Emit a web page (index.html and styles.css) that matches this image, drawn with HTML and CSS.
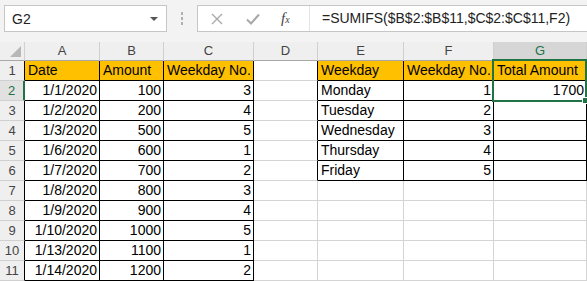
FILE: index.html
```html
<!DOCTYPE html>
<html lang="en">
<head>
  <meta charset="UTF-8">
  <title>SUMIFS by weekday</title>
  <link rel="stylesheet" href="styles.css">
</head>
<body>
  <!-- Name box and formula bar -->
  <div class="toolbar">
    <div class="name-box">
      <span>G2</span>
      <span class="caret"></span>
    </div>
    <div class="grip"><i></i><i></i><i></i></div>
    <div class="formula-bar">
      <div class="fx-buttons">
        <svg width="12" height="12" viewBox="0 0 12 12"><path d="M1 1L11 11M11 1L1 11" stroke="#a8a8a8" stroke-width="1.3" fill="none"/></svg>
        <svg width="14" height="12" viewBox="0 0 14 12"><path d="M1 6.5L5 10.5L13 1.5" stroke="#a8a8a8" stroke-width="2" fill="none"/></svg>
        <span class="fx">f<sub>x</sub></span>
      </div>
      <div class="formula">=SUMIFS($B$2:$B$11,$C$2:$C$11,F2)</div>
    </div>
  </div>

  <!-- Sheet -->
  <div class="sheet">
    <div class="ch corner"><span class="tri"></span></div>
    <div class="ch">A</div>
    <div class="ch">B</div>
    <div class="ch">C</div>
    <div class="ch">D</div>
    <div class="ch">E</div>
    <div class="ch">F</div>
    <div class="ch active">G</div>

    <!-- row 1 -->
    <div class="rh edge">1</div>
    <div class="c t gold">Date</div>
    <div class="c t gold">Amount</div>
    <div class="c t gold">Weekday No.</div>
    <div class="c edge"></div>
    <div class="c t gold">Weekday</div>
    <div class="c t gold">Weekday No.</div>
    <div class="c t gold sel">Total Amount<span class="sel-box"><span class="handle"></span></span></div>

    <!-- row 2 -->
    <div class="rh active">2</div>
    <div class="c t r">1/1/2020</div>
    <div class="c t r">100</div>
    <div class="c t r">3</div>
    <div class="c edge"></div>
    <div class="c t">Monday</div>
    <div class="c t r">1</div>
    <div class="c t r">1700</div>

    <!-- row 3 -->
    <div class="rh edge">3</div>
    <div class="c t r">1/2/2020</div>
    <div class="c t r">200</div>
    <div class="c t r">4</div>
    <div class="c edge"></div>
    <div class="c t">Tuesday</div>
    <div class="c t r">2</div>
    <div class="c t r"></div>

    <!-- row 4 -->
    <div class="rh edge">4</div>
    <div class="c t r">1/3/2020</div>
    <div class="c t r">500</div>
    <div class="c t r">5</div>
    <div class="c edge"></div>
    <div class="c t">Wednesday</div>
    <div class="c t r">3</div>
    <div class="c t r"></div>

    <!-- row 5 -->
    <div class="rh edge">5</div>
    <div class="c t r">1/6/2020</div>
    <div class="c t r">600</div>
    <div class="c t r">1</div>
    <div class="c edge"></div>
    <div class="c t">Thursday</div>
    <div class="c t r">4</div>
    <div class="c t r"></div>

    <!-- row 6 -->
    <div class="rh edge">6</div>
    <div class="c t r">1/7/2020</div>
    <div class="c t r">700</div>
    <div class="c t r">2</div>
    <div class="c edge"></div>
    <div class="c t">Friday</div>
    <div class="c t r">5</div>
    <div class="c t r"></div>

    <!-- row 7 -->
    <div class="rh edge">7</div>
    <div class="c t r">1/8/2020</div>
    <div class="c t r">800</div>
    <div class="c t r">3</div>
    <div class="c"></div>
    <div class="c"></div>
    <div class="c"></div>
    <div class="c"></div>

    <!-- row 8 -->
    <div class="rh edge">8</div>
    <div class="c t r">1/9/2020</div>
    <div class="c t r">900</div>
    <div class="c t r">4</div>
    <div class="c"></div>
    <div class="c"></div>
    <div class="c"></div>
    <div class="c"></div>

    <!-- row 9 -->
    <div class="rh edge">9</div>
    <div class="c t r">1/10/2020</div>
    <div class="c t r">1000</div>
    <div class="c t r">5</div>
    <div class="c"></div>
    <div class="c"></div>
    <div class="c"></div>
    <div class="c"></div>

    <!-- row 10 -->
    <div class="rh edge">10</div>
    <div class="c t r">1/13/2020</div>
    <div class="c t r">1100</div>
    <div class="c t r">1</div>
    <div class="c"></div>
    <div class="c"></div>
    <div class="c"></div>
    <div class="c"></div>

    <!-- row 11 -->
    <div class="rh edge">11</div>
    <div class="c t r">1/14/2020</div>
    <div class="c t r">1200</div>
    <div class="c t r">2</div>
    <div class="c"></div>
    <div class="c"></div>
    <div class="c"></div>
    <div class="c"></div>
  </div>
</body>
</html>
```

FILE: styles.css
```css
/* General */
* {
  box-sizing: border-box;
}

body {
  margin: 0;
  width: 587px;
  height: 281px;
  overflow: hidden;
  background: #fff;
  font-family: "Liberation Sans", Arial, sans-serif;
  color: #000;
}

/* Toolbar: name box + formula bar */
.toolbar {
  height: 42px;
  background: #f3f3f3;
  display: flex;
  align-items: flex-start;
  padding: 5px 0 0 4px;
}

.name-box {
  width: 163px;
  height: 27px;
  background: #fff;
  border: 1px solid #c6c6c6;
  display: flex;
  align-items: center;
  justify-content: space-between;
  padding: 0 7px 0 7px;
  font-size: 14px;
  color: #222;
}

.caret {
  width: 0;
  height: 0;
  border-left: 4px solid transparent;
  border-right: 4px solid transparent;
  border-top: 4px solid #555;
  margin-right: 1px;
}

.grip {
  width: 30px;
  height: 27px;
  display: flex;
  flex-direction: column;
  align-items: center;
  justify-content: center;
  gap: 2px;
}

.grip i {
  width: 2px;
  height: 3px;
  background: #b0b0b0;
}

.formula-bar {
  flex: 1;
  height: 27px;
  background: #fff;
  border: 1px solid #c6c6c6;
  border-right: none;
  display: flex;
  align-items: center;
}

.fx-buttons {
  width: 111px;
  height: 100%;
  display: flex;
  align-items: center;
  padding-left: 13px;
  gap: 23px;
}

.fx {
  font-family: "Liberation Serif", serif;
  font-style: italic;
  font-size: 15px;
  color: #444;
  margin-left: -2px;
}

.fx sub {
  font-size: 10px;
  vertical-align: 0;
}

.formula {
  flex: 1;
  height: 100%;
  border-left: 1px solid #e4e4e4;
  padding: 4px 0 0 12px;
  font-size: 14px;
  color: #222;
  white-space: nowrap;
}

/* Sheet grid */
.sheet {
  display: grid;
  grid-template-columns: 25px 75px 64px 90px 64px 86px 90px 93px;
  grid-template-rows: 19px repeat(11, 20px);
}

.ch {
  background: #efefef;
  border-right: 1px solid #d0d0d0;
  border-bottom: 1px solid #a8a8a8;
  text-align: center;
  font-size: 13px;
  line-height: 18px;
  color: #444;
}

.ch.active {
  background: #d6d6d6;
  color: #217346;
  border-bottom: 2px solid #217346;
}

.corner {
  position: relative;
}

.tri {
  position: absolute;
  right: 3px;
  bottom: 3px;
  width: 0;
  height: 0;
  border-left: 11px solid transparent;
  border-bottom: 11px solid #b7b7b7;
}

.rh {
  background: #efefef;
  border-right: 1px solid #a8a8a8;
  border-bottom: 1px solid #d0d0d0;
  text-align: center;
  font-size: 13px;
  line-height: 19px;
  color: #444;
}

.rh.active {
  background: #e1e1e1;
  color: #217346;
  border-right: 2px solid #217346;
}

.rh.edge {
  border-right-color: #000;
}

.c {
  border-right: 1px solid #d4d4d4;
  border-bottom: 1px solid #d4d4d4;
  font-size: 14px;
  line-height: 19px;
  padding: 0 2px 0 3px;
  white-space: nowrap;
  overflow: visible;
}

.c.t {
  border-right-color: #000;
  border-bottom-color: #000;
}

.c.edge {
  border-right-color: #000;
}

.c.r {
  text-align: right;
}

.gold {
  background: #ffc000;
}

/* Selected cell outline */
.sel {
  position: relative;
}

.sel-box {
  position: absolute;
  top: -2px;
  left: -2px;
  right: -1px;
  bottom: -22px;
  border: 2px solid #217346;
}

.handle {
  position: absolute;
  right: -4px;
  bottom: -4px;
  width: 7px;
  height: 7px;
  background: #217346;
  border: 1px solid #fff;
}
```
